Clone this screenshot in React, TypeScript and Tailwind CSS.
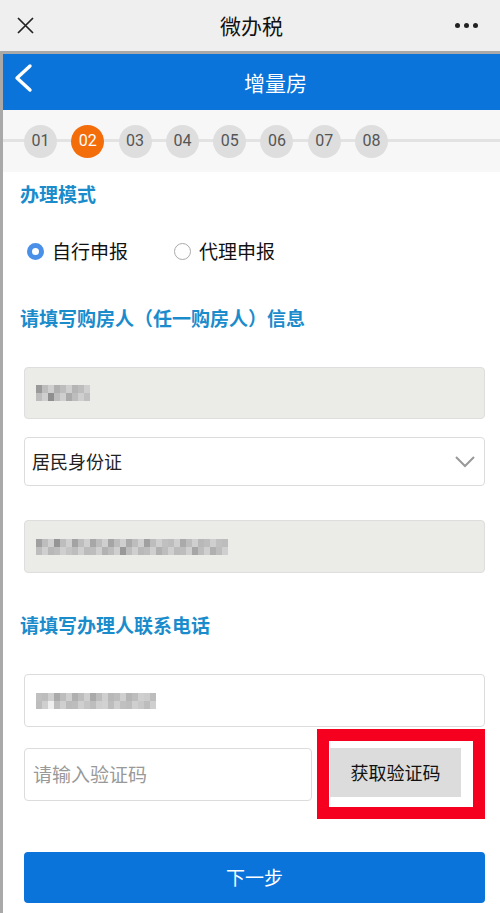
import React from "react";

const steps = ["01", "02", "03", "04", "05", "06", "07", "08"];

// fake pixelated (mosaic) text blocks
const Mosaic = ({ cells }: { cells: string[] }) => (
  <div className="flex flex-col">
    {[0, 1].map((row) => (
      <div key={row} className="flex">
        {cells.map((c, i) => (
          <div
            key={i}
            className={`w-[6px] h-[8px] ${
              (i + row) % 3 === 0 ? c : (i + row) % 3 === 1 ? "bg-[#bdbdbd]" : "bg-[#cfcfcf]"
            }`}
          />
        ))}
      </div>
    ))}
  </div>
);

const App = () => {
  return (
    <div
      className="w-[500px] h-[913px] bg-white overflow-hidden flex flex-col"
      style={{ fontFamily: '"Noto Sans CJK SC", "Noto Sans", sans-serif' }}
    >
      {/* WeChat top bar */}
      <div className="h-[51px] bg-[#efefef] flex items-center justify-between px-[17px] shrink-0">
        <svg width="17" height="17" viewBox="0 0 17 17">
          <path d="M1 1 L16 16 M16 1 L1 16" stroke="#222" strokeWidth="1.7" />
        </svg>
        <span className="text-[21px] text-[#111] ml-[14px]">微办税</span>
        <div className="flex gap-[4px] mr-[5px]">
          <span className="w-[5px] h-[5px] rounded-full bg-[#222]" />
          <span className="w-[5px] h-[5px] rounded-full bg-[#222]" />
          <span className="w-[5px] h-[5px] rounded-full bg-[#222]" />
        </div>
      </div>
      <div className="h-[3px] bg-[#a9a9a9] shrink-0" />

      <div className="flex flex-1">
        <div className="w-[3px] bg-[#a9a9a9] shrink-0" />
        <div className="flex-1 flex flex-col">
          {/* blue header */}
          <div className="h-[56px] bg-[#0a74da] flex items-center relative">
            <svg width="24" height="32" viewBox="0 0 24 32" className="absolute left-[9px] top-[9px]">
              <path d="M18 3 L5 15 L18 27" stroke="white" strokeWidth="3.4" fill="none" strokeLinecap="round" strokeLinejoin="round" />
            </svg>
            <span className="flex-1 text-center text-white text-[21px] pl-[42px] pt-[2px]">增量房</span>
          </div>

          {/* steps */}
          <div className="h-[62px] bg-[#f7f7f7] relative flex items-center">
            <div className="absolute left-0 right-0 top-[29px] h-[3px] bg-[#e3e3e3]" />
            <div className="relative flex gap-[14.3px] pl-[21px]">
              {steps.map((s) => (
                <div
                  key={s}
                  className={`w-[33px] h-[33px] rounded-full flex items-center justify-center text-[16px] ${
                    s === "02" ? "bg-[#f46d0b] text-white" : "bg-[#dedede] text-[#555]"
                  }`}
                  style={{ fontFamily: '"Roboto", sans-serif' }}
                >
                  {s}
                </div>
              ))}
            </div>
          </div>

          <div className="flex flex-col px-[21px]">
            <div className="text-[#1a8ccc] font-bold text-[19px] mt-[8px] h-[26px] -ml-[4px]">办理模式</div>

            <div className="flex items-center mt-[32px] h-[26px] pl-[3px]">
              <div className="w-[17px] h-[17px] rounded-full border-[5px] border-[#4a90e8] bg-white" />
              <span className="text-[19px] text-[#111] ml-[8px]">自行申报</span>
              <div className="w-[17px] h-[17px] rounded-full border border-[#aaa] bg-white ml-[46px]" />
              <span className="text-[19px] text-[#111] ml-[8px]">代理申报</span>
            </div>

            <div className="text-[#1a8ccc] font-bold text-[19px] mt-[40px] h-[26px] -ml-[4px]">请填写购房人（任一购房人）信息</div>

            <div className="mt-[37px] h-[52px] bg-[#ebebe8] border border-[#dedede] rounded-[4px] flex items-center px-[11px]">
              <Mosaic cells={["bg-[#9a9a9a]", "bg-[#a5a5a5]", "bg-[#8f8f8f]", "bg-[#b0b0b0]", "bg-[#999]", "bg-[#aaa]", "bg-[#b5b5b5]", "bg-[#a0a0a0]", "bg-[#c0c0c0]"]} />
            </div>

            <div className="mt-[18px] h-[49px] bg-white border border-[#dcdcdc] rounded-[4px] flex items-center justify-between px-[7px]">
              <span className="text-[18px] text-[#222]">居民身份证</span>
              <svg width="20" height="12" viewBox="0 0 20 12" className="mr-[2px]">
                <path d="M1 1 L10 10 L19 1" stroke="#999" strokeWidth="2" fill="none" />
              </svg>
            </div>

            <div className="mt-[34px] h-[53px] bg-[#ebebe8] border border-[#dedede] rounded-[4px] flex items-center px-[11px]">
              <Mosaic cells={["bg-[#a0a0a0]", "bg-[#9c9c9c]", "bg-[#b8b8b8]", "bg-[#959595]", "bg-[#aaa]", "bg-[#c4c4c4]", "bg-[#a3a3a3]", "bg-[#999]", "bg-[#bbb]", "bg-[#a7a7a7]", "bg-[#9e9e9e]", "bg-[#b2b2b2]", "bg-[#a5a5a5]", "bg-[#c8c8c8]", "bg-[#999]", "bg-[#aaa]", "bg-[#a1a1a1]", "bg-[#b9b9b9]", "bg-[#a0a0a0]", "bg-[#aaa]", "bg-[#b0b0b0]", "bg-[#c0c0c0]", "bg-[#a8a8a8]", "bg-[#bbb]", "bg-[#aaa]", "bg-[#c5c5c5]", "bg-[#a6a6a6]", "bg-[#b8b8b8]", "bg-[#cfcfcf]", "bg-[#b0b0b0]", "bg-[#c0c0c0]", "bg-[#d0d0d0]"]} />
            </div>

            <div className="text-[#1a8ccc] font-bold text-[19px] mt-[38px] h-[26px] -ml-[4px]">请填写办理人联系电话</div>

            <div className="mt-[37px] h-[53px] bg-white border border-[#dcdcdc] rounded-[4px] flex items-center px-[11px]">
              <Mosaic cells={["bg-[#c0c0c0]", "bg-[#b5b5b5]", "bg-[#eee]", "bg-[#aaa]", "bg-[#c8c8c8]", "bg-[#bbb]", "bg-[#b0b0b0]", "bg-[#cfcfcf]", "bg-[#c5c5c5]", "bg-[#aaa]", "bg-[#bcbcbc]", "bg-[#d2d2d2]", "bg-[#b8b8b8]", "bg-[#a8a8a8]", "bg-[#c0c0c0]", "bg-[#b5b5b5]", "bg-[#d0d0d0]", "bg-[#c8c8c8]", "bg-[#ccc]", "bg-[#ddd]"]} />
            </div>

            <div className="flex mt-[2px] items-start">
              <div className="mt-[19px] w-[288px] h-[53px] bg-white border border-[#dcdcdc] rounded-[4px] flex items-center px-[8px]">
                <span className="text-[19px] text-[#999]">请输入验证码</span>
              </div>
              <div className="ml-[5px] border-[12px] border-[#f5001e] w-[168px] h-[90px] flex items-start">
                <div className="mt-[7px] ml-[1px] w-[131px] h-[49px] bg-[#dcdcdc] flex items-center justify-center">
                  <span className="text-[18px] text-[#111]">获取验证码</span>
                </div>
              </div>
            </div>

            <div className="mt-[33px] h-[51px] bg-[#0a74da] rounded-[4px] flex items-center justify-center">
              <span className="text-white text-[19px]">下一步</span>
            </div>
          </div>
        </div>
      </div>
    </div>
  );
};

export default App;
